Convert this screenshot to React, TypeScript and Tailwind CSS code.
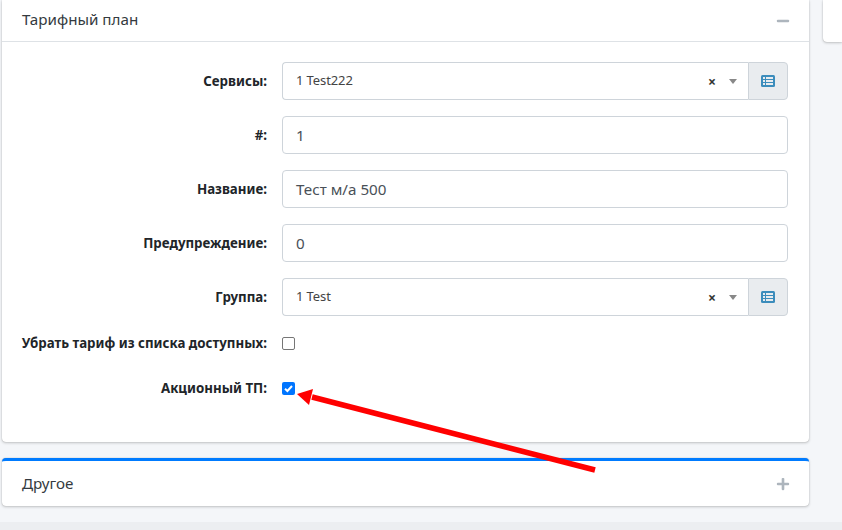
import React from 'react';
import { FaMinus, FaPlus } from 'react-icons/fa';

const labelClass = 'w-[265px] shrink-0 text-right text-[13.3px] font-bold leading-[20px] text-[#212529]';

const SelectRow = ({ label, value }: { label: string; value: string }) => (
  <div className="flex items-center mb-4">
    <label className={labelClass}>{label}</label>
    <div className="ml-[15px] flex h-[38px] w-[506px]">
      <div className="flex flex-1 items-center rounded-l-[4px] border border-r-0 border-[#ced4da] bg-white pl-[13px] text-[13px] text-[#444]">
        <span className="flex-1 tracking-[-0.1px]">{value}</span>
        <span className="mr-[13px] mt-[2px] text-[14px] font-bold leading-none text-[#333]">×</span>
        <span className="mr-[11px] h-0 w-0 border-x-[4px] border-t-[5px] border-x-transparent border-t-[#888]" />
      </div>
      <div className="flex w-[40px] items-center justify-center rounded-r-[4px] border border-[#ced4da] bg-[#e9ecef]">
        <svg width="14" height="12" viewBox="0 0 14 12">
          <rect width="14" height="12" rx="1.5" fill="#3c8dbc" />
          <rect x="2" y="2" width="2" height="2" fill="#e9ecef" />
          <rect x="5" y="2" width="7" height="2" fill="#e9ecef" />
          <rect x="2" y="5" width="2" height="2" fill="#e9ecef" />
          <rect x="5" y="5" width="7" height="2" fill="#e9ecef" />
          <rect x="2" y="8" width="2" height="2" fill="#e9ecef" />
          <rect x="5" y="8" width="7" height="2" fill="#e9ecef" />
        </svg>
      </div>
    </div>
  </div>
);

const InputRow = ({ label, value }: { label: string; value: string }) => (
  <div className="flex items-center mb-4">
    <label className={labelClass}>{label}</label>
    <div className="ml-[15px] flex h-[38px] w-[506px] items-center rounded-[4px] border border-[#ced4da] bg-white pl-[13px] text-[15.2px] text-[#495057]">
      {value}
    </div>
  </div>
);

const CheckRow = ({ label, checked, className }: { label: string; checked?: boolean; className: string }) => (
  <div className={`flex items-center ${className}`}>
    <label className={labelClass}>{label}</label>
    <div className="ml-[15px] flex">
      {checked ? (
        <span className="flex h-[13px] w-[13px] items-center justify-center rounded-[2px] bg-[#0075ff]">
          <svg width="11" height="11" viewBox="0 0 11 11">
            <path d="M2 5.8 L4.4 8 L9 3" fill="none" stroke="white" strokeWidth="2" />
          </svg>
        </span>
      ) : (
        <span className="h-[13px] w-[13px] rounded-[2px] border border-[#767676] bg-white" />
      )}
    </div>
  </div>
);

export default function App() {
  return (
    <div className="relative h-[530px] w-[842px] overflow-hidden bg-[#f4f6f9] font-['Noto_Sans','Open_Sans',sans-serif]">
      <div className="flex">
        <div className="ml-[2px] w-[807px]">
          <div className="h-[442px] rounded-b-[4px] bg-white shadow-[0_0_1px_rgba(0,0,0,0.3),0_1px_3px_rgba(0,0,0,0.2)]">
            <div className="flex h-[42px] items-center justify-between border-b border-[#dee2e6] pb-[2px] pl-5 pr-[19px]">
              <span className="text-[15.2px] text-[#343a40]">Тарифный план</span>
              <FaMinus className="mt-[3px] h-[14px] w-[14px] text-[#adb5bd]" />
            </div>
            <div className="pt-5">
              <SelectRow label="Сервисы:" value="1 Test222" />
              <InputRow label="#:" value="1" />
              <InputRow label="Название:" value="Тест м/а 500" />
              <InputRow label="Предупреждение:" value="0" />
              <SelectRow label="Группа:" value="1 Test" />
              <CheckRow label="Убрать тариф из списка доступных:" className="mt-[17px]" />
              <CheckRow label="Акционный ТП:" checked className="mt-[25px]" />
            </div>
          </div>
          <div className="mt-4 flex h-[48px] items-center justify-between rounded-[4px] border-t-[3px] border-[#007bff] bg-white pl-5 pr-[19px] shadow-[0_0_1px_rgba(0,0,0,0.3),0_1px_3px_rgba(0,0,0,0.2)]">
            <span className="text-[15.2px] text-[#343a40]">Другое</span>
            <FaPlus className="h-[14px] w-[14px] text-[#adb5bd]" />
          </div>
          <div className="-ml-[2px] mt-4 h-[10px] w-[842px] bg-[#eceef1]" />
        </div>
        <div className="ml-[14px] h-[42px] flex-1 rounded-bl-[4px] bg-white shadow-[0_0_1px_rgba(0,0,0,0.3),0_1px_3px_rgba(0,0,0,0.2)]" />
      </div>
      <svg className="absolute left-0 top-0" width="842" height="530" viewBox="0 0 842 530">
        <line x1="595" y1="470" x2="312" y2="397" stroke="#ff0000" strokeWidth="5.5" />
        <polygon points="297,394 313,389 309,405" fill="#ff0000" />
      </svg>
    </div>
  );
}
